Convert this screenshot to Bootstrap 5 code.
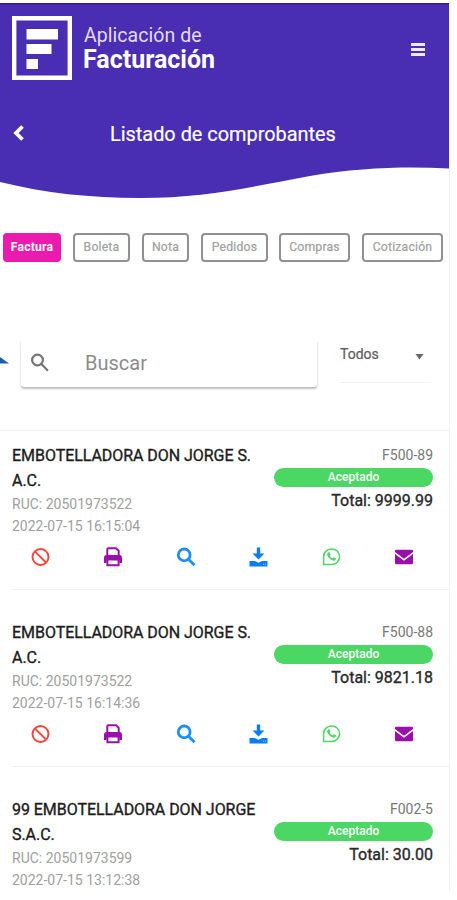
<!DOCTYPE html>
<html lang="es">
<head>
<meta charset="utf-8">
<meta name="viewport" content="width=device-width, initial-scale=1">
<title>Listado de comprobantes</title>
<link href="https://cdn.jsdelivr.net/npm/bootstrap@5.3.0/dist/css/bootstrap.min.css" rel="stylesheet">
<style>
body{font-family:Roboto,"Liberation Sans",sans-serif;background:#fff;color:#222;height:900px;overflow:hidden}
.app{width:450px;margin-top:3px;border-right:1px solid #f1f1f3}
.hero{height:197px;width:449px}
.wave{left:0;top:0;width:449px;height:197px}
.brand-row{height:95px;padding:13px 24px 0 12px}
.logo-text{margin:8px 0 0 11px;line-height:24px}
.logo-a{font-size:19.5px;letter-spacing:.05px;color:#e3dcf8}
.logo-b{font-size:25px;font-weight:700;margin-left:-1px}
.menu-btn{margin-top:27px}
.title-row{height:72px;padding:0 0 0 12px}
.page-title{font-size:19.9px;margin-left:84px;padding-top:2px;-webkit-text-stroke:.2px #fff}
.tabs{padding:33px 0 0 3px;height:62px}
.tab{height:29px;border:2px solid #919191;border-radius:4px;font-size:12.2px;letter-spacing:.2px;font-weight:400;-webkit-text-stroke:.2px #a0a0a0;color:#a0a0a0;padding:0;line-height:25px;background:#fff}
.tab.on{background:#ec1bb0;border-color:#ec1bb0;color:#fff;font-weight:700;-webkit-text-stroke:0}
.t1{width:58px;margin-right:12px}.t2{width:57px;margin-right:12px}.t3{width:47px;margin-right:12px}
.t4{width:67px;margin-right:11px}.t5{width:71px;margin-right:12px}.t6{width:81px}
.filters{height:168px;padding-top:76px}
.edge{width:9px;height:8px;margin-top:19px}
.search{width:296px;height:49px;margin-left:12px;border-radius:3px;box-shadow:0 2px 2px rgba(0,0,0,.25),0 0 2px rgba(0,0,0,.07);padding-left:9px;clip-path:inset(4px -4px -6px -4px)}
.search span{font-size:20px;color:#8c8c8c;margin-left:35px}
.state{width:91px;height:45px;margin-left:22px;border-bottom:1px solid #f3f3f3;font-size:14px;color:#5c5c5c;padding:0 6px 11px 1px}
.state span{-webkit-text-stroke:.2px #5c5c5c}
.state svg{margin-top:4px}
.items{border-top:1px solid #efefef}
.item{height:177.2px;padding:12px 16px 0 12px}
.item:last-child{height:auto}
.who{width:250px}
.name{font-size:16px;line-height:25px;color:#1c1c1c;-webkit-text-stroke:.35px #1c1c1c;white-space:nowrap;letter-spacing:-.05px}
.sub{font-size:14px;line-height:22px;color:#a0a0a0}
.sum{width:159px}
.code{font-size:14px;line-height:24px;color:#777}
.pill{height:19px;background:#4bd763;color:#fff;font-size:12px;font-weight:500;line-height:19px;margin-top:1px}
.total{font-size:16px;line-height:28px;color:#2a2a2a;-webkit-text-stroke:.35px #2a2a2a}
.acts{padding:10px 19px 0 18px}
.rule{height:1px;background:#f1f1f1;margin:22px -16px 0 0}
</style>
<script src="https://cdn.jsdelivr.net/npm/bootstrap@5.3.0/dist/js/bootstrap.bundle.min.js"></script>
</head>
<body>
<svg class="d-none">
<symbol id="ban" viewBox="0 0 20 20"><g fill="none" stroke="#fa4238" stroke-width="1.9"><circle cx="10.500" cy="10" r="8"/><path d="M4.800 4.300l11.400 11.400"/></g></symbol>
<symbol id="print" viewBox="0 0 20 20"><path d="M4.300 9V2.200q0-1 1-1h7.700L15.700 3.900V9" fill="none" stroke="#9a0fac" stroke-width="2"/><path d="M1 16v-5q0-3 2.500-3h13Q19 8 19 11v5h-2.600v-2.500H3.600V16z" fill="#9a0fac"/><path d="M4.400 13v5.300h11.200V13" fill="none" stroke="#9a0fac" stroke-width="2"/></symbol>
<symbol id="find" viewBox="0 0 20 20"><g fill="none" stroke="#1e90f2" stroke-width="2.800"><circle cx="8.200" cy="7.900" r="5.900"/><path d="M12.500 12.200l6 6"/></g></symbol>
<symbol id="down" viewBox="0 0 20 20"><path d="M8.800.5h3.400v6h4.200L10.500 12.600 4.600 6.500h4.200zM1.500 14h5.300l3.700 1.800 3.700-1.800h5.300v5.500h-18z" fill="#0a7cf7"/><path d="M15 17.200h1m1 0h1" stroke="#b5d8ff"/></symbol>
<symbol id="wa" viewBox="0 0 20 20"><path d="M2.600 17.500V10A8 7.800 0 1 1 10.600 17.500z" fill="none" stroke="#4bd763" stroke-width="1.500"/><path d="M7.300 5.300l1.300.1 1 2.200-.9 1.200q1.100 1.900 2.900 2.700l1.100-1.200 2.200 1q.2 1.900-1.500 2.300-1.500.4-4-1.300-2.700-2-3.300-4.200-.2-1.700 1.200-2.800z" fill="#4bd763"/></symbol>
<symbol id="mail" viewBox="0 0 20 20"><path d="M1 5V4q0-1.300 1.300-1.300h15.400Q19 2.700 19 4v1l-9 6.800zM1 7l9 6.800L19 7v9q0 1.300-1.300 1.300H2.300Q1 17.300 1 16z" fill="#9a0fac"/></symbol>
</svg>
<main class="app">
<header class="hero position-relative text-white">
<svg class="wave position-absolute" viewBox="0 0 449 197"><path d="M0 0H449V165.500C405 163.500 360 164.500 310 173C250 184 205 195 140 195C90 195 45 190 0 179Z" fill="#492db3"/><path d="M0 .8H449" stroke="#3c16a0" stroke-width="1.600"/></svg>
<div class="position-relative">
<div class="brand-row d-flex align-items-start">
<svg width="61" height="64" viewBox="0 0 61 64"><path d="M2.200 2.200h55.600v59.600H2.200z" fill="none" stroke="#fff" stroke-width="4.400"/><path d="M14.500 13H46v10.500H14.500zM14.500 28H39.500v10H14.500zM14.500 43H26v10H14.500z" fill="#fff"/></svg>
<div class="logo-text"><div class="logo-a">Aplicación de</div><div class="logo-b">Facturación</div></div>
<svg class="menu-btn ms-auto" width="14" height="14" viewBox="0 0 14 14"><path d="M0 1.500h14M0 6.500h14M0 11.500h14" stroke="#efe9fb" stroke-width="2.800"/></svg>
</div>
<div class="title-row d-flex align-items-center">
<svg width="14" height="18" viewBox="0 0 14 18"><path d="M10.500 1.500L4 8l6.500 6.500" fill="none" stroke="#fff" stroke-width="3.800"/></svg>
<span class="page-title">Listado de comprobantes</span>
</div>
</div>
</header>
<nav class="tabs d-flex">
<button class="tab on t1">Factura</button><button class="tab t2">Boleta</button><button class="tab t3">Nota</button><button class="tab t4">Pedidos</button><button class="tab t5">Compras</button><button class="tab t6">Cotización</button>
</nav>
<section class="filters d-flex align-items-start">
<svg class="edge" viewBox="0 0 9 8"><path d="M0 0L9 6.500H0z" fill="#2059b5"/></svg>
<div class="search d-flex align-items-center">
<svg width="20" height="20" viewBox="0 0 20 20"><g fill="none" stroke="#757575" stroke-width="2.200"><circle cx="7.500" cy="7" r="5.400"/><path d="M11.400 11l6.500 6.700"/></g></svg>
<span>Buscar</span></div>
<div class="state d-flex align-items-center justify-content-between"><span>Todos</span><svg width="9" height="6" viewBox="0 0 9 6"><path d="M.5 0h8L4.500 5.500z" fill="#666"/></svg></div>
</section>
<section class="items">
<article class="item">
<div class="d-flex justify-content-between"><div class="who"><div class="name">EMBOTELLADORA DON JORGE S.<br>A.C.</div><div class="sub">RUC: 20501973522</div><div class="sub">2022-07-15 16:15:04</div></div>
<div class="sum text-end"><div class="code">F500-89</div><div class="pill rounded-pill text-center">Aceptado</div><div class="total">Total: 9999.99</div></div></div>
<div class="acts d-flex justify-content-between"><svg width="20" height="20"><use href="#ban"/></svg><svg width="20" height="20"><use href="#print"/></svg><svg width="20" height="20"><use href="#find"/></svg><svg width="20" height="20"><use href="#down"/></svg><svg width="20" height="20"><use href="#wa"/></svg><svg width="20" height="20"><use href="#mail"/></svg></div>
<div class="rule"></div>
</article>
<article class="item">
<div class="d-flex justify-content-between"><div class="who"><div class="name">EMBOTELLADORA DON JORGE S.<br>A.C.</div><div class="sub">RUC: 20501973522</div><div class="sub">2022-07-15 16:14:36</div></div>
<div class="sum text-end"><div class="code">F500-88</div><div class="pill rounded-pill text-center">Aceptado</div><div class="total">Total: 9821.18</div></div></div>
<div class="acts d-flex justify-content-between"><svg width="20" height="20"><use href="#ban"/></svg><svg width="20" height="20"><use href="#print"/></svg><svg width="20" height="20"><use href="#find"/></svg><svg width="20" height="20"><use href="#down"/></svg><svg width="20" height="20"><use href="#wa"/></svg><svg width="20" height="20"><use href="#mail"/></svg></div>
<div class="rule"></div>
</article>
<article class="item">
<div class="d-flex justify-content-between"><div class="who"><div class="name">99 EMBOTELLADORA DON JORGE<br>S.A.C.</div><div class="sub">RUC: 20501973599</div><div class="sub">2022-07-15 13:12:38</div></div>
<div class="sum text-end"><div class="code">F002-5</div><div class="pill rounded-pill text-center">Aceptado</div><div class="total">Total: 30.00</div></div></div>
</article>
</section>
</main>
</body>
</html>
